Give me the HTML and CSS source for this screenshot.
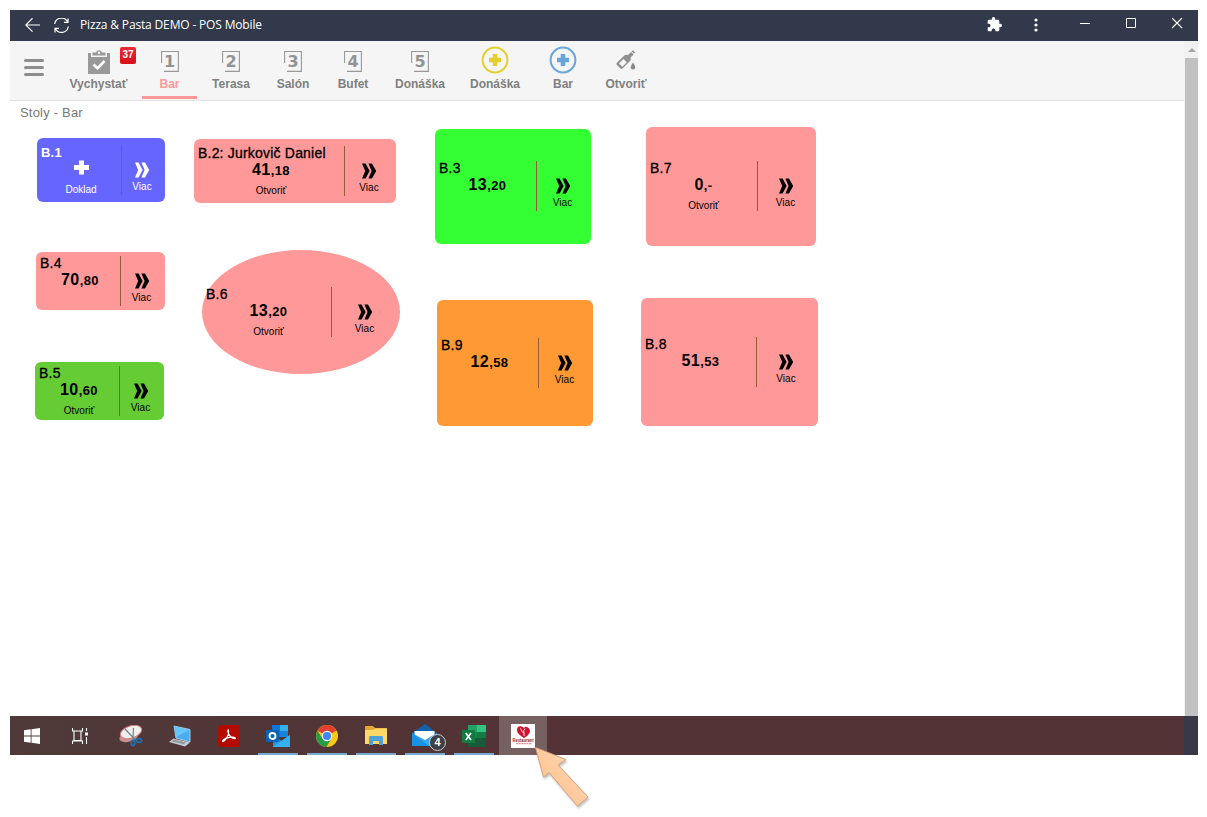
FILE: index.html
```html
<!DOCTYPE html>
<html lang="sk">
<head>
    <meta charset="UTF-8">
    <meta name="viewport" content="width=device-width, initial-scale=1.0">
    <title>Pizza &amp; Pasta DEMO - POS Mobile</title>
    <link rel="stylesheet" href="styles.css">
</head>
<body>
    <svg class="symbols" width="0" height="0">
        <symbol id="frame" viewBox="0 0 18 22">
            <path d="M.6 13V1.500H17.400V21.400H3" fill="none" stroke="#999" stroke-width="1.1"/>
        </symbol>
        <symbol id="more" viewBox="0 0 16 16">
            <path d="M1 .5H4.600L8.600 8L4.600 15.500H1L4.200 8ZM7.400.5H11L15.200 8L11 15.500H7.400L10.600 8Z" fill="currentColor"/>
        </symbol>
        <symbol id="plus-circle" viewBox="0 0 28 28">
            <circle cx="14" cy="14" r="12.4" fill="none" stroke="currentColor" stroke-width="2"/>
            <path d="M11.7 8h4.6v3.7H20v4.6h-3.7V20h-4.6v-3.7H8v-4.6h3.7z" fill="currentColor"/>
        </symbol>
    </svg>

    <div class="desktop">
        <div class="titlebar">
            <svg class="back" width="16" height="16" viewBox="0 0 16 16"><path d="M15 7H1M7.500.300L.8 7L7.500 13.700" fill="none" stroke="#fff" stroke-width="1.2"/></svg>
            <svg class="reload" width="16" height="16" viewBox="0 0 16 16"><path d="M.7 6A6.800 6.800 0 0 1 13.500 3.800M14.300 8.500A6.800 6.800 0 0 1 1.500 10.700M14 .4V4.400H10M1 14.400V10.400H5" fill="none" stroke="#fff" stroke-width="1.2"/></svg>
            <span class="title">Pizza &amp; Pasta DEMO - POS Mobile</span>
            <div class="window-buttons">
                <svg class="puzzle" width="15" height="15" viewBox="1 1 22 22"><path d="M20.5 11H19V7c0-1.1-.9-2-2-2h-4V3.5a2.5 2.5 0 0 0-5 0V5H4c-1.1 0-2 .9-2 2v3.8h1.5a2.7 2.7 0 0 1 0 5.4H2V20c0 1.1.9 2 2 2h3.8v-1.5a2.7 2.7 0 0 1 5.4 0V22H17c1.1 0 2-.9 2-2v-4h1.5a2.5 2.5 0 0 0 0-5z" fill="#fff"/></svg>
                <svg class="dots" width="4" height="14" viewBox="0 0 4 14"><g fill="#fff"><circle cx="2" cy="2" r="1.6"/><circle cx="2" cy="7" r="1.6"/><circle cx="2" cy="12" r="1.6"/></g></svg>
                <svg class="win" width="11" height="11" viewBox="0 0 11 11"><path d="M0 5.5H10" stroke="#fff"/></svg>
                <svg class="win" width="11" height="11" viewBox="0 0 11 11"><path d="M.5.5H9.5V9.5H.5Z" fill="none" stroke="#fff"/></svg>
                <svg class="win" width="11" height="11" viewBox="0 0 11 11"><path d="M0 0L10 10M10 0L0 10" stroke="#fff" stroke-width="1.2"/></svg>
            </div>
        </div>

        <div class="app">
            <div class="page">
                <nav class="toolbar">
                    <div class="menu"><span></span><span></span><span></span></div>
                    <div class="tab">
                        <svg width="22" height="25" viewBox="0 0 22 25">
                            <path d="M0 3H3V7H19V3H22V24H0Z" fill="#999"/>
                            <path d="M4.500 5.500V2.500H8Q8.500.300 11 .300T14 2.500H17.500V5.500Z" fill="#999"/>
                            <circle cx="11" cy="2.700" r="1.200" fill="#f5f5f5"/>
                            <path d="M5.500 14.500L9.500 18.300L16.500 11" fill="none" stroke="#fff" stroke-width="2.600"/>
                        </svg>
                        <span>Vychystať</span>
                        <b class="badge">37</b>
                    </div>
                    <div class="tab active"><div class="num"><svg><use href="#frame"/></svg>1</div><span>Bar</span></div>
                    <div class="tab"><div class="num"><svg><use href="#frame"/></svg>2</div><span>Terasa</span></div>
                    <div class="tab"><div class="num"><svg><use href="#frame"/></svg>3</div><span>Salón</span></div>
                    <div class="tab"><div class="num"><svg><use href="#frame"/></svg>4</div><span>Bufet</span></div>
                    <div class="tab"><div class="num"><svg><use href="#frame"/></svg>5</div><span>Donáška</span></div>
                    <div class="tab"><svg class="circle yellow"><use href="#plus-circle"/></svg><span>Donáška</span></div>
                    <div class="tab"><svg class="circle blue"><use href="#plus-circle"/></svg><span>Bar</span></div>
                    <div class="tab">
                        <svg width="20" height="20" viewBox="0 0 20 20">
                            <path d="M17 .300L19.200 2.500L17.800 3.600L15.500 1.500ZM15 2L17.600 4.500L14.800 7.300L14.500 10.500L6.500 18.500Q5.500 19.400 4.500 18.500L.7 14.700Q0 13.800.8 12.800L8.800 4.900L12.300 4.700Z" fill="#919191"/>
                            <path d="M3 13.500L7.500 9L10.800 12.300L6.300 16.800Z" fill="#f5f5f5"/>
                            <path d="M17 12.500Q19.300 15.800 19.300 17.200A2.300 2.300 0 0 1 14.700 17.200Q14.700 15.800 17 12.500Z" fill="#888"/>
                        </svg>
                        <span>Otvoriť</span>
                    </div>
                </nav>

                <main class="floor">
                    <h1>Stoly - Bar</h1>

                    <div class="table free" id="b1">
                        <div class="order">
                            <div class="name">B.1</div>
                            <div class="price"><svg class="add" width="15" height="15" viewBox="0 0 15 15"><path d="M5 .5H10V5H15V10H10V14.500H5V10H0V5H5Z" fill="#fff"/></svg></div>
                            <div class="action">Doklad</div>
                        </div>
                        <div class="more"><svg><use href="#more"/></svg>Viac</div>
                    </div>

                    <div class="table" id="b2">
                        <div class="order">
                            <div class="name">B.2: Jurkovič Daniel</div>
                            <div class="price">41<small>,18</small></div>
                            <div class="action">Otvoriť</div>
                        </div>
                        <div class="more"><svg><use href="#more"/></svg>Viac</div>
                    </div>

                    <div class="table lime" id="b3">
                        <div class="order">
                            <div class="name">B.3</div>
                            <div class="price">13<small>,20</small></div>
                            <div class="action"></div>
                        </div>
                        <div class="more"><svg><use href="#more"/></svg>Viac</div>
                    </div>

                    <div class="table" id="b7">
                        <div class="order">
                            <div class="name">B.7</div>
                            <div class="price">0<small>,-</small></div>
                            <div class="action">Otvoriť</div>
                        </div>
                        <div class="more"><svg><use href="#more"/></svg>Viac</div>
                    </div>

                    <div class="table" id="b4">
                        <div class="order">
                            <div class="name">B.4</div>
                            <div class="price">70<small>,80</small></div>
                            <div class="action"></div>
                        </div>
                        <div class="more"><svg><use href="#more"/></svg>Viac</div>
                    </div>

                    <div class="table round" id="b6">
                        <div class="order">
                            <div class="name">B.6</div>
                            <div class="price">13<small>,20</small></div>
                            <div class="action">Otvoriť</div>
                        </div>
                        <div class="more"><svg><use href="#more"/></svg>Viac</div>
                    </div>

                    <div class="table green" id="b5">
                        <div class="order">
                            <div class="name">B.5</div>
                            <div class="price">10<small>,60</small></div>
                            <div class="action">Otvoriť</div>
                        </div>
                        <div class="more"><svg><use href="#more"/></svg>Viac</div>
                    </div>

                    <div class="table orange" id="b9">
                        <div class="order">
                            <div class="name">B.9</div>
                            <div class="price">12<small>,58</small></div>
                            <div class="action"></div>
                        </div>
                        <div class="more"><svg><use href="#more"/></svg>Viac</div>
                    </div>

                    <div class="table" id="b8">
                        <div class="order">
                            <div class="name">B.8</div>
                            <div class="price">51<small>,53</small></div>
                            <div class="action"></div>
                        </div>
                        <div class="more"><svg><use href="#more"/></svg>Viac</div>
                    </div>
                </main>
            </div>
            <div class="scrollbar">
                <div class="scroll-up"><svg width="8" height="4" viewBox="0 0 8 4"><path d="M0 4L4 0L8 4Z" fill="#a3a3a3"/></svg></div>
                <div class="thumb"></div>
            </div>
        </div>

        <div class="taskbar">
            <div class="task start">
                <svg width="16" height="16" viewBox="0 0 16 16"><path d="M0 2.300L6.700 1.300V7.600H0ZM7.500 1.200L16 0V7.600H7.500ZM0 8.400H6.700V14.700L0 13.700ZM7.500 8.400H16V16L7.500 14.800Z" fill="#fff"/></svg>
            </div>
            <div class="task view">
                <svg width="16" height="16" viewBox="0 0 16 16"><path d="M.5 0V3H10.500V0M2 3.500V12.500H9V3.500M.5 16V13H10.500V16M14.500 0V3M14.500 9V16" fill="none" stroke="#fff" stroke-width="1.100"/><path d="M13 4.500H16V7.500H13Z" fill="#fff"/></svg>
            </div>
            <div class="task">
                <svg width="24" height="22" viewBox="0 0 24 22">
                    <ellipse cx="10" cy="11.500" rx="10" ry="5" transform="rotate(-18 10 11.500)" fill="#c88e90"/>
                    <ellipse cx="12" cy="7" rx="11" ry="6" transform="rotate(-18 12 7)" fill="#f1eeee" stroke="#cf7f80"/>
                    <path d="M6 4L16.500 15M14.500 3L14 15" stroke="#6d858a" stroke-width="1.200"/>
                    <g fill="none" stroke="#2370ad" stroke-width="1.800"><ellipse cx="14" cy="18" rx="1.700" ry="2.600"/><ellipse cx="20" cy="15.500" rx="2.600" ry="1.800"/></g>
                </svg>
            </div>
            <div class="task">
                <svg width="24" height="22" viewBox="0 0 24 22">
                    <path d="M6 1L22 4.500V17L8 13Z" fill="#49adf0" stroke="#b9ddf3" stroke-width=".8"/>
                    <path d="M6.500 1.500L21.500 5L8 12Z" fill="#68c5fb"/>
                    <path d="M5.500 13.500L22 17.500L17 21.500L1 17Z" fill="#c5cbd0"/>
                    <path d="M6 14.500L18 17.500L15.500 19.300L3.500 16.300Z" fill="#8f999f"/>
                </svg>
            </div>
            <div class="task">
                <svg width="22" height="22" viewBox="0 0 22 22">
                    <rect width="22" height="22" rx="3.500" fill="#b30b00"/>
                    <path d="M5 16.500C7.500 15.500 11.500 9.500 10.500 5.500C10 4 9.500 5.500 10 7C11 10.500 13.500 13.500 17 13.700C18.500 13.300 16.500 12 14 12.200C11 12.500 7.500 13.200 5.500 14.800C4 16 4.500 16.700 5 16.500Z" fill="none" stroke="#fff" stroke-width="1.200"/>
                </svg>
            </div>
            <div class="task open">
                <svg width="24" height="22" viewBox="0 0 24 22">
                    <path d="M6 0H22V12H6Z" fill="#0f78d4"/><path d="M14 0H22V6H14Z" fill="#33b0ed"/><path d="M14 6H22V12H14Z" fill="#1684dc"/>
                    <path d="M7 10L15.500 16L24 10V22H7Z" fill="#1b96e8"/><path d="M24 10L7 21.500V22H24Z" fill="#37aef0"/>
                    <rect y="5" width="13" height="12" rx="1" fill="#0863b6"/>
                    <circle cx="6.500" cy="11" r="3" fill="none" stroke="#fff" stroke-width="1.900"/>
                </svg>
            </div>
            <div class="task open">
                <svg width="22" height="22" viewBox="0 0 22 22">
                    <circle cx="11" cy="11" r="11" fill="#fbc916"/>
                    <path d="M11 11L1.500 5.500A11 11 0 0 1 20.500 5.500Z" fill="#e2402f"/>
                    <path d="M1.500 5.500A11 11 0 0 0 10.500 22L15.500 13.500L6.500 13.500Z" fill="#279b49"/>
                    <circle cx="11" cy="11" r="5.200" fill="#fff"/><circle cx="11" cy="11" r="4.100" fill="#4285f4"/>
                </svg>
            </div>
            <div class="task open">
                <svg width="22" height="20" viewBox="0 0 22 20">
                    <path d="M0 1Q0 0 1 0H8L10 2H21Q22 2 22 3V18H0Z" fill="#e4a82e"/><path d="M0 4H8L10 2.500H22V18H0Z" fill="#ffd967"/>
                    <path d="M4 11Q4 10 5 10H17Q18 10 18 11V19H14V15H8V19H4Z" fill="#4ca2d9"/>
                </svg>
            </div>
            <div class="task open">
                <svg class="mail" width="26" height="23" viewBox="0 0 26 23">
                    <path d="M0 9L13 0L25 9V22H0Z" fill="#1262ab"/><path d="M2.500 7H22.500V17H2.500Z" fill="#fff"/>
                    <path d="M0 9L13 16L25 9V22H0Z" fill="#36a9ec"/><path d="M0 9L17 22H0Z" fill="#1792e5"/>
                </svg>
                <b class="count">4</b>
            </div>
            <div class="task open">
                <svg width="24" height="22" viewBox="0 0 24 22">
                    <path d="M6 0H24V22H6Z" fill="#19854a"/><path d="M6 0H15V7H6Z" fill="#21a366"/><path d="M15 0H24V7H15Z" fill="#33c481"/><path d="M15 7H24V13H15Z" fill="#107c41"/><path d="M6 13H24V22H6Z" fill="#185c37"/>
                    <rect y="5" width="13" height="13" rx="1" fill="#107c41"/>
                    <path d="M3.800 8L9 15M9 8L3.800 15" stroke="#fff" stroke-width="1.700"/>
                </svg>
            </div>
            <div class="task current">
                <svg width="24" height="24" viewBox="0 0 24 24">
                    <rect width="24" height="24" fill="#fff"/>
                    <path d="M13 14Q5.500 9.500 6 5.500Q6.500 2 9.500 2.300Q11.500 2.300 13 4Q14.500 2 17 3.500Q20 6 18.500 9Q17 12 13 14Z" fill="#d0102c"/>
                    <path d="M9.500 4.500Q11 8 13 9.500Q12 6 14 4.500M13 9.500V12" fill="none" stroke="#fff" stroke-width=".9"/>
                    <text x="12" y="18.300" text-anchor="middle" textLength="21" lengthAdjust="spacingAndGlyphs" class="logo-text">Restaurant</text>
                    <path d="M5 19.700H21" stroke="#e2717b" stroke-width="1" stroke-dasharray="2 .6"/>
                </svg>
            </div>
            <div class="corner"></div>
        </div>

        <svg class="pointer" width="70" height="72" viewBox="0 0 70 72">
            <defs>
                <linearGradient id="peach" x1="0" y1="1" x2="1" y2="0">
                    <stop offset="0" stop-color="#ffbb80"/>
                    <stop offset="1" stop-color="#ffdcc0"/>
                </linearGradient>
            </defs>
            <path d="M3.500 3.500L34 15.500L26 21L56 53L45.500 62L17 28.500L11.500 33Z" fill="url(#peach)" stroke="#d9a27a"/>
        </svg>
    </div>
</body>
</html>
```
FILE: styles.css
```css
body {
    margin: 0;
    padding: 10px;
    min-height: 100vh;
    box-sizing: border-box;
    background-color: #fff;
    font-family: "Liberation Sans", Arial, sans-serif;
}

svg {
    display: block;
    flex: none;
}

.symbols {
    position: absolute;
}

.desktop {
    position: relative;
    width: 1188px;
    height: 797px;
}

/* Title bar */
.titlebar {
    display: flex;
    align-items: center;
    height: 31px;
    padding: 0 15px;
    box-sizing: border-box;
    background-color: #31394b;
    color: #fff;
}

.back {
    margin-right: 13px;
}

.reload {
    margin-right: 10px;
}

.title {
    margin-top: -2px;
    font-family: "Open Sans", sans-serif;
    font-size: 12px;
    letter-spacing: -0.16px;
    line-height: 16px;
}

.window-buttons {
    display: grid;
    grid-template-columns: 47px 46px 46px 46px 11px;
    align-items: center;
    margin-left: auto;
}

.puzzle,
.dots {
    margin-top: -2px;
}

.win {
    margin-bottom: 5px;
}

/* App */
.app {
    display: flex;
    height: 675px;
}

.page {
    flex: 1;
}

.toolbar {
    display: grid;
    grid-template-columns: 45px 87px 55px 68px 56px 64px 70px 80px 56px 70px;
    height: 60px;
    box-sizing: border-box;
    border-bottom: 1px solid #e2e2e2;
    background-color: #f5f5f5;
}

.menu {
    display: flex;
    flex-direction: column;
    gap: 4px;
    padding: 18px 0 0 14px;
}

.menu span {
    width: 20px;
    height: 3px;
    border-radius: 2px;
    background-color: #8d8d8d;
}

.tab {
    position: relative;
    display: grid;
    grid-template-rows: 36px 14px;
    justify-items: center;
    align-content: start;
    height: 58px;
    box-sizing: border-box;
    color: #808080;
    font-size: 12px;
    font-weight: bold;
    line-height: 14px;
}

.tab > svg,
.num {
    margin-top: 9px;
}

.tab.active {
    border-bottom: 3px solid #f99;
    color: #f99;
}

.badge {
    position: absolute;
    top: 6px;
    right: 6px;
    width: 16px;
    height: 17px;
    border-radius: 2px;
    background: linear-gradient(#ee2a35, #d70d18);
    color: #fff;
    font-size: 10px;
    line-height: 16px;
    text-align: center;
}

.num {
    position: relative;
    width: 18px;
    height: 22px;
    color: #939393;
    font-family: "DejaVu Sans", Verdana, sans-serif;
    font-size: 16px;
    line-height: 23px;
    text-align: center;
}

.num svg {
    position: absolute;
    inset: 0;
    width: 18px;
    height: 22px;
}

.tab > .circle {
    width: 28px;
    height: 28px;
    margin-top: 5px;
}

.yellow {
    color: #e5cf2f;
}

.blue {
    color: #67a5dc;
}

.scrollbar {
    display: flex;
    flex-direction: column;
    width: 13px;
    border-left: 1px solid #f1f1f1;
}

.scroll-up {
    display: grid;
    place-items: center;
    height: 17px;
    background-color: #f1f1f1;
}

.thumb {
    flex: 1;
    background-color: #c1c1c1;
}

/* Floor plan, every table is placed where it stands in the room */
.floor {
    position: relative;
}

.floor h1 {
    margin: 0;
    padding: 4px 10px;
    color: #777;
    font-size: 13px;
    font-weight: normal;
    letter-spacing: 0.2px;
    line-height: 15px;
}

.table {
    position: absolute;
    display: grid;
    align-items: center;
    border-radius: 6px;
    background-color: #f99;
    color: #000;
}

.table.free {
    background-color: #66f;
    color: #fff;
}

.table.lime {
    background-color: #3f3;
}

.table.green {
    background-color: #6c3;
}

.table.orange {
    background-color: #f93;
}

.table.round {
    border-radius: 50%;
}

#b1 { left: 27px; top: 37px; width: 128px; height: 64px; grid-template-columns: 1fr 44px; }
#b2 { left: 184px; top: 38px; width: 202px; height: 64px; grid-template-columns: 1fr 52px; }
#b3 { left: 425px; top: 28px; width: 156px; height: 115px; grid-template-columns: 1fr 55px; }
#b4 { left: 26px; top: 151px; width: 129px; height: 58px; grid-template-columns: 1fr 45px; }
#b5 { left: 25px; top: 261px; width: 129px; height: 58px; grid-template-columns: 1fr 45px; }
#b6 { left: 192px; top: 149px; width: 198px; height: 124px; grid-template-columns: 1fr 69px; }
#b7 { left: 636px; top: 26px; width: 170px; height: 119px; grid-template-columns: 1fr 59px; }
#b8 { left: 631px; top: 197px; width: 177px; height: 128px; grid-template-columns: 1fr 62px; }
#b9 { left: 427px; top: 199px; width: 156px; height: 126px; grid-template-columns: 1fr 55px; }

/* odd heights would put the content on half a pixel */
#b3,
#b7 {
    padding-bottom: 1px;
    box-sizing: border-box;
}

.order {
    display: grid;
    grid-template-rows: 15px 19px 16px;
    padding-left: 4px;
    text-align: center;
}

.name {
    font-size: 14px;
    letter-spacing: 0.2px;
    line-height: 15px;
    text-align: left;
    white-space: nowrap;
    -webkit-text-stroke: 0.3px currentColor;
}

.free .name {
    font-weight: bold;
    font-size: 13px;
    -webkit-text-stroke: 0;
}

.price {
    font-size: 16px;
    font-weight: bold;
    letter-spacing: 0.4px;
    line-height: 17px;
}

.price small {
    font-size: 13px;
}

.add {
    margin: 0 auto;
}

.action {
    padding-top: 5px;
    font-size: 10px;
    line-height: 12px;
}

.more {
    display: flex;
    flex-direction: column;
    align-items: center;
    gap: 3px;
    height: 50px;
    padding: 17px 3px 0 0;
    box-sizing: border-box;
    border-left: 1px solid #96593a;
    font-size: 10px;
    line-height: 12px;
}

.more svg {
    width: 16px;
    height: 16px;
}

/* Taskbar */
.taskbar {
    display: flex;
    height: 39px;
    background: linear-gradient(90deg, #4f3939, #533335 40%);
}

.task {
    position: relative;
    display: grid;
    place-items: center;
    width: 49px;
}

.task.start {
    width: 44px;
}

.task.view {
    width: 52px;
}

.task.open::after {
    content: "";
    position: absolute;
    bottom: 0;
    left: 5px;
    width: 40px;
    height: 2px;
    background-color: #76a9cf;
}

.task.current {
    width: 48px;
    margin-left: 1px;
    background-color: #766061;
}

.count {
    position: absolute;
    right: 3px;
    bottom: 4px;
    width: 15px;
    height: 15px;
    border: 1px solid #c5c9cc;
    border-radius: 50%;
    background-color: #3b4146;
    color: #fff;
    font-size: 11px;
    line-height: 15px;
    text-align: center;
}

.logo-text {
    font-size: 4.5px;
    font-weight: bold;
    fill: #8e1d2b;
}

.corner {
    width: 14px;
    margin-left: auto;
    background-color: #383846;
}

/* Arrow that points at the pinned app */
.pointer {
    position: absolute;
    left: 522px;
    top: 734px;
    filter: drop-shadow(1px 2px 1px rgba(0, 0, 0, 0.25));
}
```
